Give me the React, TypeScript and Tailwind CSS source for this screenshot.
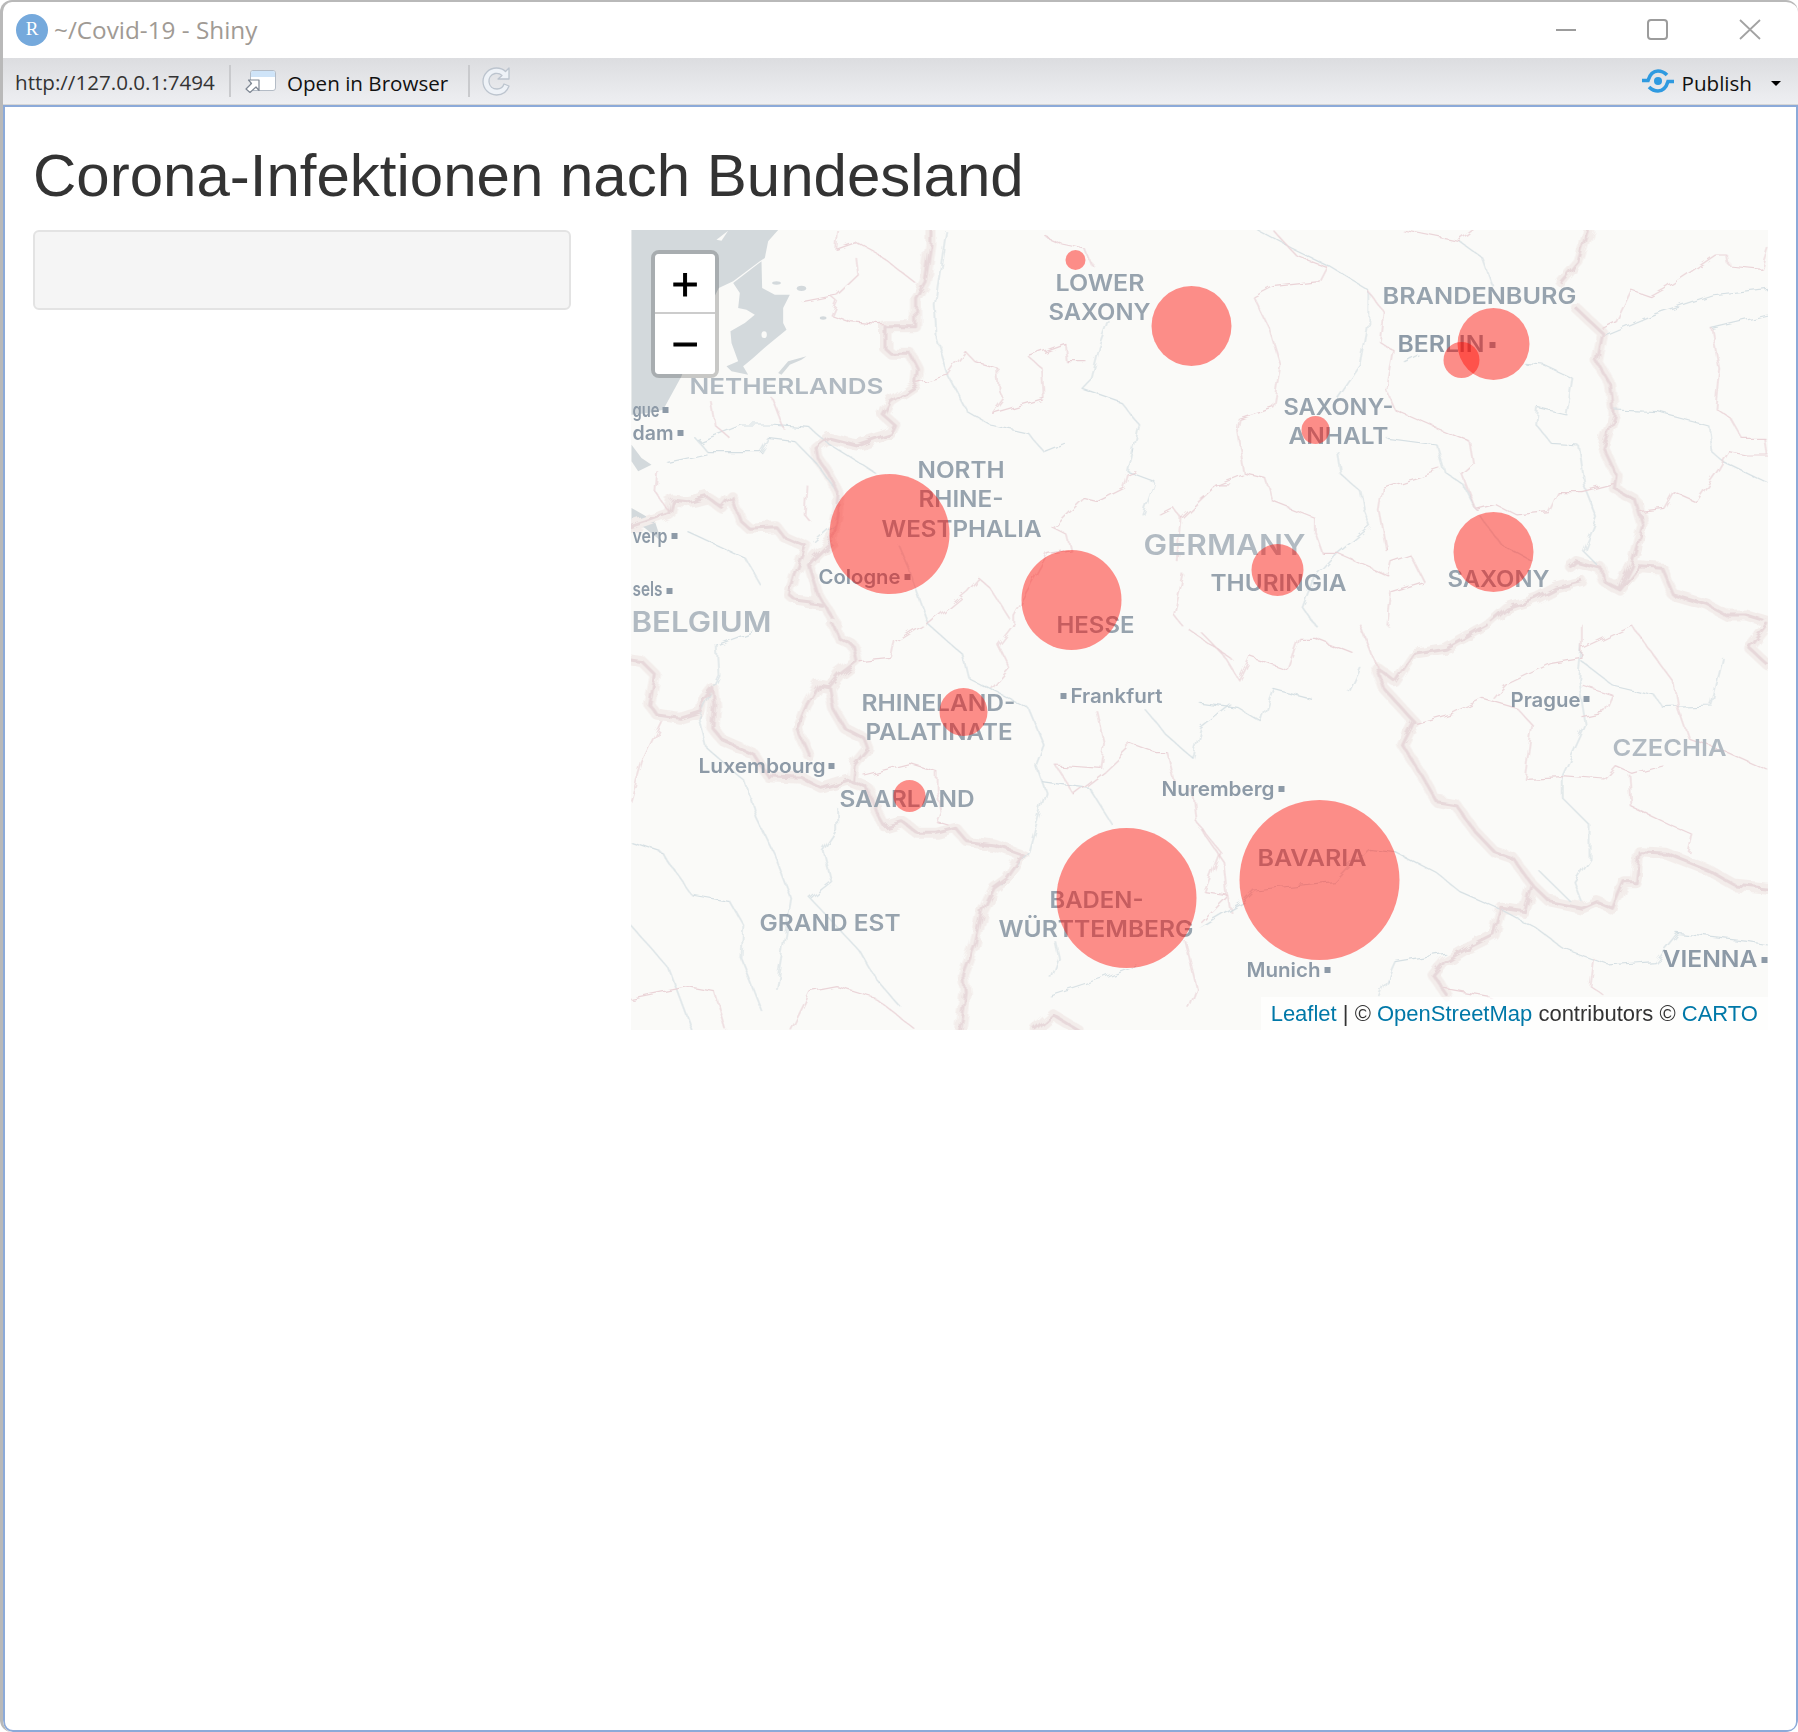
import React from 'react';

// Line work is traced per map quadrant, each with its own scale, so coordinates stay easy to compare with the crops.
interface Quadrant {
  transform: string;
  borders: string[];
  states: string[];
  rivers: string[];
}

const QUADRANTS: Quadrant[] = [
  {
    transform: 'translate(630 225) scale(0.3827 0.3333)',
    borders: [
      'M785,15 L785,60 L770,170 L745,220 L745,305 L665,305 L665,370 L680,385 L730,385 L750,430 L745,480 L680,530 L660,570 L690,600 L680,625 L590,660 L520,640 L485,670 L490,700 L520,750 L545,810 L540,870 L525,950 L480,1000 L465,1020 L490,1110 L500,1130 L540,1200',
      'M0,905 L40,890 L100,865 L110,825 L150,830 L200,815 L240,850 L265,815 L290,890 L310,910 L380,905 L400,935 L460,965 L430,1050 L415,1110 L430,1125 L495,1135',
    ],
    states: [
      'M540,15 L535,70 L585,50 L650,90 L745,175',
      'M590,100 L595,150 L540,210 L450,230',
      'M525,215 L540,230 L525,270 L575,290 L665,300',
      'M875,380 L900,410 L960,430 L965,500 L975,520 L945,565 L1080,520 L1075,430 L1040,395 L1135,355 L1140,410 L1190,410',
      'M750,475 L830,450 L875,380',
      'M1090,40 L1130,60 L1190,75 L1205,120',
      'M210,530 L220,600 L260,640',
      'M370,520 L400,610',
      'M460,780 L455,870 L470,890',
      'M1105,910 L1185,820 L1220,830 L1290,790 L1300,750 L1320,740',
      'M1105,910 L1140,930 L1150,975 L1090,985 L1040,1090 L1000,1170 L1000,1200',
      'M775,1200 L880,1100 L910,1060 L940,1090 L990,1180',
      'M1385,870 L1420,850 L1440,880 L1530,780 L1568,780',
      'M1440,880 L1430,1010',
      'M1445,1050 L1420,1170 L1440,1200',
      'M70,740 L65,800 L100,860',
    ],
    rivers: [
      'M825,20 L795,240 L800,340 L830,450 L880,560 L940,600 L1040,625 L1080,680 L1135,655',
      'M1250,290 L1225,370 L1205,460 L1180,490 L1280,530 L1330,600 L1300,740 L1370,770 L1340,870',
      'M180,650 L290,600 L370,600 L470,610 L510,650 L580,700 L640,745',
      'M170,640 L200,680 L340,680 L360,640 L430,650 L490,720 L545,810',
      'M100,715 L200,690',
      'M480,950 L540,890',
      'M700,960 L730,1040 L780,1200',
      'M150,920 L300,1000 L340,1080',
    ],
  },
  {
    transform: 'translate(1200 225) scale(0.3814 0.3333)',
    borders: [
      'M1015,15 L990,110 L945,170',
      'M985,250 L1055,325 L1040,410 L1075,480 L1085,570 L1055,665 L1090,750 L1085,790 L1140,825 L1160,900 L1130,1020 L1100,1090',
      'M970,1025 L985,1010 L1050,1030 L1055,1065 L1100,1095 L1150,1025 L1210,1030 L1240,1110 L1330,1140 L1380,1170 L1430,1170 L1487,1190',
      'M1000,1070 L930,1090 L880,1120 L800,1150 L750,1200',
    ],
    states: [
      'M530,15 L680,50 L720,15',
      'M190,15 L250,90 L330,125 L310,170 L190,185 L140,215 L180,310 L210,420 L190,545 L100,580 L95,610 L115,745 L170,760 L190,830 L300,880 L300,920 L320,985 L360,985 L490,1050 L500,1010 L550,990 L585,1070 L500,1100 L490,1200',
      'M440,200 L480,260 L470,350 L510,380 L490,500 L510,555 L620,610 L705,650 L715,715 L685,745 L720,850 L770,835 L830,870 L910,860 L935,800 L1000,800 L1085,775',
      'M480,790 L630,735',
      'M480,790 L470,860 L490,980',
      'M0,820 L45,780 L110,750',
      'M1487,70 L1470,130 L1385,120 L1380,90 L1350,90 L1280,145 L1220,190 L1180,215 L1130,195 L1090,290 L1055,310',
      'M1340,310 L1360,430 L1350,550 L1390,580 L1420,640 L1480,640 L1487,690 L1430,690 L1385,680 L1360,730 L1300,830 L1240,800 L1215,850 L1150,860',
    ],
    rivers: [
      'M150,15 L240,70 L340,125 L440,195 L440,300 L420,420 L360,520',
      'M360,680 L370,750 L420,800 L430,860 L445,905 L360,985 L300,1060 L270,1150 L300,1200',
      'M490,640 L620,660 L640,740 L690,780 L720,850',
      'M535,410 L570,390',
      'M850,415 L900,420 L975,460 L960,570 L885,550 L880,600 L920,655 L990,660 L1005,780 L1040,880 L1005,980 L1040,1020',
      'M680,50 L740,100 L765,180',
      'M1060,330 L1195,265 L1340,210 L1487,190',
      'M1340,310 L1487,270',
      'M1085,555 L1200,560 L1330,600 L1340,680 L1370,710 L1487,775',
      'M730,870 L790,960 L870,1010',
    ],
  },
  {
    transform: 'translate(630 625) scale(0.3827 0.3333)',
    borders: [
      'M530,0 L545,40 L580,60 L590,110 L545,150 L520,185 L530,250 L560,310 L610,340 L620,370 L585,420 L580,470',
      'M520,185 L490,180 L460,240 L435,310 L465,390',
      'M0,105 L30,110 L65,150 L50,240 L70,270 L130,280 L185,260 L190,225 L215,190 L220,240 L215,310 L240,345 L320,385 L360,455 L450,460 L500,490 L570,465 L580,470',
      'M580,470 L620,490 L640,555 L665,605 L710,590 L750,625 L800,625 L850,610 L880,650 L950,660 L1025,690 L985,760 L950,790 L920,860 L900,960 L870,1050 L875,1100 L860,1215',
      'M1060,1215 L1105,1170 L1170,1215',
    ],
    states: [
      'M0,530 L30,410 L80,290',
      'M0,1120 L150,1085 L220,1100 L250,1215',
      'M420,1215 L470,1100 L540,1085 L640,1120 L740,1210',
      'M1568,100 L1460,15',
      'M1000,0 L960,60 L990,130 L945,190',
      'M1220,260 L1240,360 L1230,430 L1110,420 L1160,510 L1240,440 L1300,375 L1300,350 L1370,380 L1400,380 L1420,470',
      'M1470,500 L1480,590 L1540,680 L1500,800 L1560,810 L1568,860',
      'M1450,950 L1480,1090 L1460,1150',
      'M610,450 L730,415 L800,440 L800,490 L810,560 L800,590 L830,600',
      'M600,110 L680,100 L690,50 L760,0',
    ],
    rivers: [
      'M780,0 L870,90 L885,160 L1040,250 L1080,360 L1060,420 L1085,500 L1040,680 L970,780',
      'M225,60 L230,150 L180,280 L200,370 L300,470 L330,580 L380,700 L420,820 L380,1090',
      'M320,20 L225,60',
      'M540,550 L540,620 L505,680 L525,770 L470,820 L600,980 L640,1060 L700,1140',
      'M0,650 L80,680 L160,810 L260,830 L295,900 L290,1000 L345,1160',
      'M0,900 L100,1030 L160,1215',
      'M1075,470 L1200,490 L1260,600',
      'M1100,1060 L1120,1000 L1110,950',
      'M1095,1110 L1230,1060 L1320,1020',
      'M1350,260 L1400,330 L1470,400 L1490,310 L1568,240',
    ],
  },
  {
    transform: 'translate(1200 625) scale(0.3814 0.3333)',
    borders: [
      'M750,0 L640,70 L560,85 L510,170 L460,125 L480,190 L560,290 L530,360 L580,450 L620,530 L670,540 L720,620 L770,680 L820,700 L870,780 L915,830 L1000,850 L1040,830 L1080,850 L1110,770 L1140,770 L1150,680 L1220,685 L1330,735 L1400,780 L1487,790',
      'M870,780 L850,860 L790,850 L770,930 L700,970 L640,1010 L610,1050 L650,1115',
      'M1487,120 L1440,70 L1487,0',
    ],
    states: [
      'M0,20 L60,90 L100,165 L130,95 L230,135 L260,40 L300,40 L400,85',
      'M420,0 L460,120',
      'M0,610 L60,710 L70,810 L0,890',
      'M565,295 L660,265 L740,220 L830,250 L870,300 L850,460 L950,455 L1060,465 L1090,425 L1130,445 L1210,420',
      'M770,220 L800,180 L920,115 L1000,100 L1000,0',
      'M1000,70 L1130,0 L1240,170 L1250,240 L1280,340 L1380,380 L1487,435',
      'M1125,450 L1130,545 L1230,600 L1290,630 L1280,680',
      'M1030,1000 L1020,1080 L1060,1115',
      'M640,1090 L760,1115',
      'M1000,180 L1080,210 L1060,260 L1000,275',
    ],
    rivers: [
      'M0,905 L110,830 L140,795 L350,770 L390,720 L440,670 L510,680 L620,745 L680,800 L790,855 L880,910 L950,970 L1070,1020 L1190,1010 L1250,925 L1440,950 L1487,960',
      'M0,235 L100,250 L160,290 L190,190 L290,220',
      'M420,130 L390,200',
      'M1000,60 L990,160 L1010,300 L950,450 L950,520 L1020,600 L1020,700 L980,770 L1000,830',
      'M890,740 L970,830',
      'M1000,110 L1080,180 L1190,210 L1210,245 L1340,240 L1370,100',
      'M470,1115 L510,1010 L640,985',
    ],
  },
];

interface MapLabel {
  text: string;
  x: number;
  y: number;
  width: number;
  size: number;
  color?: string;
}

const STATE = '#97a3ae';
const COUNTRY = '#b1bac2';
const CITY = '#8d9aa7';

const LABELS: MapLabel[] = [
  { text: 'LOWER', x: 1055, y: 291, width: 89, size: 23 },
  { text: 'SAXONY', x: 1048, y: 320, width: 102, size: 23 },
  { text: 'NETHERLANDS', x: 689, y: 394, width: 194, size: 22, color: COUNTRY },
  { text: 'NORTH', x: 917, y: 478, width: 87, size: 23 },
  { text: 'RHINE-', x: 918, y: 507, width: 85, size: 23 },
  { text: 'WESTPHALIA', x: 881, y: 537, width: 160, size: 23 },
  { text: 'GERMANY', x: 1143, y: 555, width: 162, size: 28, color: COUNTRY },
  { text: 'BELGIUM', x: 631, y: 632, width: 140, size: 28, color: COUNTRY },
  { text: 'HESSE', x: 1056, y: 633, width: 78, size: 23 },
  { text: 'THURINGIA', x: 1210, y: 591, width: 136, size: 23 },
  { text: 'SAXONY', x: 1447, y: 587, width: 102, size: 23 },
  { text: 'SAXONY-', x: 1283, y: 415, width: 110, size: 23 },
  { text: 'ANHALT', x: 1288, y: 444, width: 100, size: 23 },
  { text: 'BRANDENBURG', x: 1382, y: 304, width: 194, size: 23 },
  { text: 'BERLIN', x: 1397, y: 352, width: 87, size: 23, color: CITY },
  { text: 'RHINELAND-', x: 861, y: 711, width: 154, size: 23 },
  { text: 'PALATINATE', x: 865, y: 740, width: 147, size: 23 },
  { text: 'SAARLAND', x: 839, y: 807, width: 135, size: 23 },
  { text: 'GRAND EST', x: 759, y: 931, width: 141, size: 23 },
  { text: 'BADEN-', x: 1049, y: 908, width: 94, size: 23 },
  { text: 'WÜRTTEMBERG', x: 998, y: 937, width: 195, size: 23 },
  { text: 'BAVARIA', x: 1257, y: 866, width: 109, size: 23 },
  { text: 'CZECHIA', x: 1612, y: 756, width: 114, size: 23, color: COUNTRY },
  { text: 'VIENNA', x: 1662, y: 967, width: 95, size: 23, color: CITY },
  // cut off by the map edge in the tile image
  { text: 'gue', x: 632, y: 417, width: 27, size: 20, color: CITY },
  { text: 'dam', x: 632, y: 440, width: 41, size: 20, color: CITY },
  { text: 'verp', x: 632, y: 543, width: 35, size: 20, color: CITY },
  { text: 'sels', x: 632, y: 596, width: 30, size: 20, color: CITY },
  { text: 'Cologne', x: 818, y: 584, width: 82, size: 20, color: CITY },
  { text: 'Frankfurt', x: 1070, y: 703, width: 92, size: 20, color: CITY },
  { text: 'Luxembourg', x: 698, y: 773, width: 127, size: 20, color: CITY },
  { text: 'Nuremberg', x: 1161, y: 796, width: 113, size: 20, color: CITY },
  { text: 'Munich', x: 1246, y: 977, width: 74, size: 20, color: CITY },
  { text: 'Prague', x: 1510, y: 707, width: 70, size: 20, color: CITY },
];

// left/top of the little city squares
const CITY_DOTS = [
  [662, 407], [677, 430], [671, 533], [666, 588], [904, 574], [1489, 342], [1060, 693],
  [828, 763], [1278, 786], [1324, 967], [1583, 696], [1761, 957],
];

const CASES = [
  { cx: 1075, cy: 260, r: 10 },
  { cx: 1191, cy: 326, r: 40 },
  { cx: 889, cy: 534, r: 60 },
  { cx: 1071, cy: 600, r: 50 },
  { cx: 1493, cy: 344, r: 36 },
  { cx: 1461, cy: 360, r: 18 },
  { cx: 1315, cy: 430, r: 14 },
  { cx: 1277, cy: 570, r: 26 },
  { cx: 1493, cy: 552, r: 40 },
  { cx: 963, cy: 712, r: 24 },
  { cx: 909, cy: 796, r: 16 },
  { cx: 1126, cy: 898, r: 70 },
  { cx: 1319, cy: 880, r: 80 },
];

function GermanyMap() {
  return (
    <svg viewBox="631 230 1136 800" className="block h-[800px] w-full bg-[#fafaf8]">
      <defs>
        <filter id="wobble" x="0" y="0" width="100%" height="100%">
          <feTurbulence type="fractalNoise" baseFrequency="0.07" numOctaves="2" seed="4" />
          <feDisplacementMap in="SourceGraphic" scale="9" />
        </filter>
      </defs>

      {/* North sea and IJsselmeer */}
      <g transform="translate(631 228) scale(0.3333)" fill="#d3d9dc">
        <path d="M0,6 L440,6 L410,40 L400,90 L385,100 L305,160 L262,180 L200,300 L150,445 L95,545 L50,555 L0,560 Z" />
        <path d="M305,165 L390,100 L392,180 L430,200 L475,200 L455,240 L455,285 L465,305 L410,350 L365,390 L335,415 L350,440 L300,430 L285,415 L320,400 L300,345 L297,310 L340,285 L370,260 L345,245 L320,240 L325,195 Z" />
        <ellipse cx="435" cy="165" rx="13" ry="5" />
        <ellipse cx="510" cy="181" rx="14" ry="8" />
        <ellipse cx="575" cy="270" rx="10" ry="5" />
        <path d="M440,435 L470,400 L525,385 L510,395 L475,410 L450,440 Z" />
        <path d="M0,650 L30,690 L60,710 L20,730 L0,700 Z" />
        <path d="M0,840 L70,880 L90,940 L40,900 L0,880 Z" />
        <path d="M255,35 L290,8 L270,38 Z" fill="#fafaf8" />
        <ellipse cx="398" cy="320" rx="8" ry="10" fill="#fafaf8" />
      </g>

      <g filter="url(#wobble)" fill="none" strokeLinejoin="round" strokeLinecap="round">
        {QUADRANTS.map((q, i) => (
          <g key={i} transform={q.transform}>
            {q.borders.map((d) => (
              <path key={d} d={d} stroke="#f3edeb" strokeWidth="11" vectorEffect="non-scaling-stroke" />
            ))}
            {q.rivers.map((d) => (
              <path key={d} d={d} stroke="#d5dfe3" strokeWidth="1.2" vectorEffect="non-scaling-stroke" />
            ))}
            {q.states.map((d) => (
              <path key={d} d={d} stroke="#ead3d7" strokeWidth="1.2" vectorEffect="non-scaling-stroke" />
            ))}
            {q.borders.map((d) => (
              <path key={d + 'x'} d={d} stroke="#e7d8da" strokeWidth="3" vectorEffect="non-scaling-stroke" />
            ))}
          </g>
        ))}
      </g>

      {LABELS.map((l) => (
        <text
          key={l.text + l.x}
          x={l.x}
          y={l.y}
          fontSize={l.size}
          fill={l.color ?? STATE}
          textLength={l.width}
          lengthAdjust="spacingAndGlyphs"
          className="font-['Inter',sans-serif] font-semibold"
        >
          {l.text}
        </text>
      ))}
      {CITY_DOTS.map(([x, y]) => (
        <rect key={x} x={x} y={y} width="6" height="6" fill={CITY} />
      ))}

      {CASES.map((c) => (
        <circle key={c.cx + '-' + c.cy} cx={c.cx} cy={c.cy} r={c.r} fill="#ff0800" fillOpacity="0.45" />
      ))}
    </svg>
  );
}

function BrowserIcon() {
  return (
    <svg width="32" height="24" viewBox="0 0 32 24" className="shrink-0">
      <rect x="5.5" y="1.5" width="25" height="20" rx="2.5" fill="#fff" stroke="#b4bcc6" />
      <path d="M6 4 a2 2 0 0 1 2 -2 h20 a2 2 0 0 1 2 2 v4 H6 Z" fill="#cfe4f8" />
      <path d="M1 20 L6.5 14.5 L3.5 11 H14 V21.5 L11 18 L5 23.5 Z" fill="#fff" stroke="#7f8894" strokeWidth="1.2" strokeLinejoin="round" />
    </svg>
  );
}

function RefreshIcon() {
  return (
    <svg width="28" height="30" viewBox="0 0 28 30">
      <path
        d="M27 2 V13 H16 L20 9.5 C18 7.5 15.5 7 13 7.5 C9 8.5 6.5 12 7 16 C7.5 20.5 11 23 15 23 C18 23 21 21 22 18 L27 20 C25 26 20 29 14.5 29 C7 29 1 23 1 15.5 C1 8 7 2 14.5 2 C18 2 21 3 23.5 5.5 Z"
        fill="#eef2f7"
        stroke="#bcc4ce"
        strokeWidth="1.3"
        strokeLinejoin="round"
      />
    </svg>
  );
}

function PublishIcon() {
  return (
    <svg width="32" height="24" viewBox="0 0 32 24" fill="none" stroke="#2f9ae0" strokeWidth="3.6">
      <path d="M0 11.5 H6 C8 5 12 2 16 2 C19 2 22 3 25 6" />
      <path d="M32 12.5 H26 C24 19 20 22 16 22 C13 22 10 21 7 18" />
      <circle cx="16" cy="12" r="4" fill="#2f9ae0" stroke="none" />
    </svg>
  );
}

export default function App() {
  return (
    <div className="flex h-[1732px] w-[1798px] flex-col overflow-hidden rounded-t-[12px] rounded-b-[12px] border-t-2 border-l-[3px] border-[#b9b9b9] bg-white">
      {/* title bar */}
      <div className="flex h-[56px] shrink-0 items-center pl-[13px] font-['Open_Sans',sans-serif]">
        <div className="flex h-8 w-8 items-center justify-center rounded-full bg-[#75a9dc] pb-0.5 font-['Liberation_Serif',serif] text-[19px] text-white">
          R
        </div>
        <span className="ml-[6px] text-[24.3px] text-[#a09a94]">~/Covid-19 - Shiny</span>
        <div className="ml-auto flex items-center pr-[36px] pb-[2px]">
          <svg width="24" height="24" viewBox="0 0 24 24" stroke="#9c9c9c" strokeWidth="2" fill="none">
            <path d="M2 13 H22" />
          </svg>
          <svg width="24" height="24" viewBox="0 0 24 24" stroke="#9c9c9c" strokeWidth="2" fill="none" className="ml-[68px]">
            <rect x="2" y="3" width="19" height="19" rx="3" />
          </svg>
          <svg width="24" height="24" viewBox="0 0 24 24" stroke="#a3a3a3" strokeWidth="1.8" fill="none" className="ml-[68px]">
            <path d="M2 3 L22 22 M22 3 L2 22" />
          </svg>
        </div>
      </div>

      {/* viewer toolbar */}
      <div className="flex h-[46px] shrink-0 items-center bg-gradient-to-b from-[#dcdde0] to-[#eeeff2] pl-[12px] font-['Open_Sans',sans-serif] text-[20.6px]">
        <span className="w-[214px] pt-[2px] text-[#333]">http://127.0.0.1:7494</span>
        <div className="h-[32px] w-[2px] bg-[#c9cacd]" />
        <div className="ml-[14px]">
          <BrowserIcon />
        </div>
        <span className="ml-[10px] pt-[4px] text-[#111]">Open in Browser</span>
        <div className="ml-[20px] h-[32px] w-[2px] bg-[#c9cacd]" />
        <div className="ml-[12px]">
          <RefreshIcon />
        </div>
        <div className="ml-auto flex items-center pr-[17px]">
          <PublishIcon />
          <span className="ml-[8px] pt-[4px] text-[#111]">Publish</span>
          <div className="mt-[6px] ml-[19px] h-0 w-0 border-x-[5px] border-t-[5px] border-x-transparent border-t-black" />
        </div>
      </div>
      <div className="h-[1px] shrink-0 bg-[#d6d6d6]" />

      {/* shiny page */}
      <div className="min-h-0 flex-1 rounded-b-[10px] border-2 border-[#8caad9] bg-white px-[28px] font-['Liberation_Sans',Arial,sans-serif]">
        <h1 className="pt-[36px] text-[60px] leading-[66px] text-[#333]">Corona-Infektionen nach Bundesland</h1>
        <div className="mt-[21px] flex gap-[60px]">
          <div className="h-[80px] w-[538px] shrink-0 rounded-[6px] border-2 border-[#e3e3e3] bg-[#f5f5f5]" />
          <div className="relative h-[800px] flex-1">
            <GermanyMap />
            <div className="absolute top-[20px] left-[20px] w-[68px] rounded-[8px] border-4 border-black/20 bg-clip-padding font-['DejaVu_Sans',sans-serif] text-[36px] leading-[60px] text-black">
              <div className="h-[60px] rounded-t-[4px] border-b-2 border-[#ccc] bg-white text-center [-webkit-text-stroke:1px_black]">+</div>
              <div className="h-[60px] rounded-b-[4px] bg-white text-center [-webkit-text-stroke:1px_black]">−</div>
            </div>
            <div className="absolute right-0 bottom-0 flex h-[33px] items-center bg-white/70 px-[10px] text-[22px] text-[#333]">
              <a href="#leaflet" className="text-[#0078a8]">Leaflet</a>
              <span className="whitespace-pre"> | © </span>
              <a href="#osm" className="text-[#0078a8]">OpenStreetMap</a>
              <span className="whitespace-pre"> contributors © </span>
              <a href="#carto" className="text-[#0078a8]">CARTO</a>
            </div>
          </div>
        </div>
      </div>
    </div>
  );
}
